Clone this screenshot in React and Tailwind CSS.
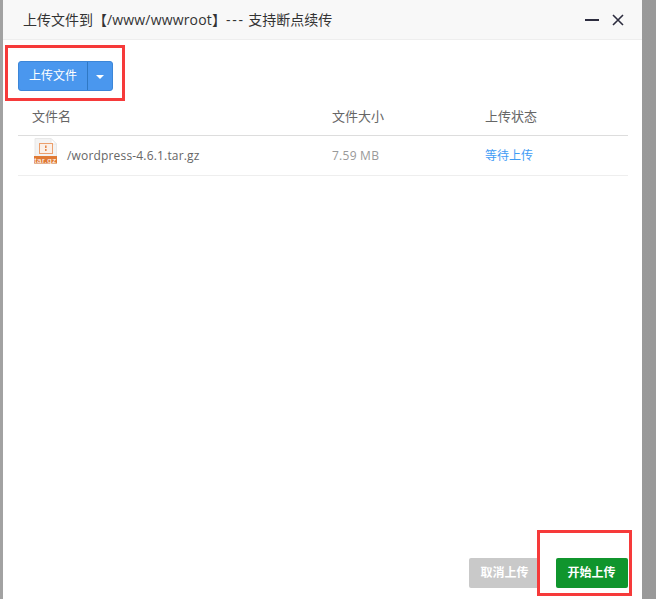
// App.jsx
import React from 'react';

const FONT = 'font-["Open_Sans","Noto_Sans_CJK_SC",sans-serif]';

const TarIcon = () => (
    <svg width="23" height="26" viewBox="0 0 23 26" className="mb-[10px] block">
        <path d="M1 0.5H17L22.5 6V25.5H1Z" fill="#f3f3f3" stroke="#e8e8e8" />
        <path d="M17 0.5V6H22.5Z" fill="#ffffff" stroke="#e8e8e8" />
        <rect x="5.5" y="5.5" width="13" height="10" fill="#fbf0e8" stroke="#ec9f6c" />
        <rect x="11" y="7.5" width="1.6" height="2.5" fill="#e58a4c" />
        <rect x="11" y="11" width="1.6" height="2" fill="#e58a4c" />
        <rect x="0" y="18" width="23" height="7.5" fill="#e07a35" />
        <text x="11.5" y="25" textAnchor="middle" fontSize="8" fontFamily="Liberation Sans" letterSpacing="0.5" fill="#ffffff">tar.gz</text>
    </svg>
);

const App = () => {
    return (
        <div className={`relative h-[599px] w-[656px] overflow-hidden bg-gradient-to-r from-[#a2a2a2] to-[#999999] pl-[3px] ${FONT}`}>
            <div className="flex h-full w-[639px] flex-col bg-white">
                <div className="flex h-10 shrink-0 items-center justify-between border-b border-[#eeeeee] bg-[#f8f8f8] pl-5 pr-[17px]">
                    <span className="text-[14px] text-[#333333]">
                        上传文件到【<span className="tracking-[0.17px]">/www/wwwroot</span>】<span className="tracking-[1.7px]">---</span> 支持断点续传
                    </span>
                    <div className="flex items-center gap-3">
                        <span className="block h-0.5 w-[14px] bg-[#2d2d3f]" />
                        <svg width="14" height="14" viewBox="0 0 14 14" className="block">
                            <path d="M2 2L12 12M12 2L2 12" stroke="#2d2d3f" strokeWidth="1.6" fill="none" />
                        </svg>
                    </div>
                </div>

                <div className="flex-1 px-[15px] pt-[21px]">
                    <div className="flex h-[30px] w-[95px] overflow-hidden rounded-[3px] border border-[#3c86d8] bg-[#4a97ee] text-white">
                        <span className="flex w-[69px] items-center justify-center border-r border-[#2f78c4] text-[12px]">上传文件</span>
                        <span className="flex flex-1 items-center justify-center">
                            <span className="mt-0.5 block h-0 w-0 border-x-4 border-t-4 border-x-transparent border-t-white" />
                        </span>
                    </div>

                    <div className="mt-[5px] w-[610px] text-[13px]">
                        <div className="flex h-[40px] items-center border-b border-[#dddddd] pt-[2px] text-[#666666]">
                            <span className="w-[314px] pl-[14px]">文件名</span>
                            <span className="w-[153px]">文件大小</span>
                            <span>上传状态</span>
                        </div>
                        <div className="flex h-[40px] items-center border-b border-[#eeeeee] text-[12px]">
                            <span className="flex w-[314px] items-center gap-[10px] pl-[16px] text-[#666666]">
                                <TarIcon />
                                <span className="tracking-[0.17px]">/wordpress-4.6.1.tar.gz</span>
                            </span>
                            <span className="w-[153px] tracking-[0.25px] text-[#999999]">7.59 MB</span>
                            <span className="text-[#3f9cf5]">等待上传</span>
                        </div>
                    </div>
                </div>

                <div className="flex shrink-0 justify-end gap-4 pb-[11px] pr-[14px]">
                    <button className="h-[30px] w-[71px] rounded-[2px] bg-[#c9c9c9] text-[12px] font-bold text-white">取消上传</button>
                    <button className="h-[30px] w-[72px] rounded-[2px] bg-[#10952d] pr-px text-[12px] font-bold text-white">开始上传</button>
                </div>
            </div>

            {/* red annotation boxes */}
            <div className="absolute left-[5px] top-[45px] h-[56px] w-[120px] border-[3px] border-[#f63a3a]" />
            <div className="absolute left-[537px] top-[530px] h-[66px] w-[95px] border-[3px] border-[#f63a3a]" />
        </div>
    );
};

export default App;
